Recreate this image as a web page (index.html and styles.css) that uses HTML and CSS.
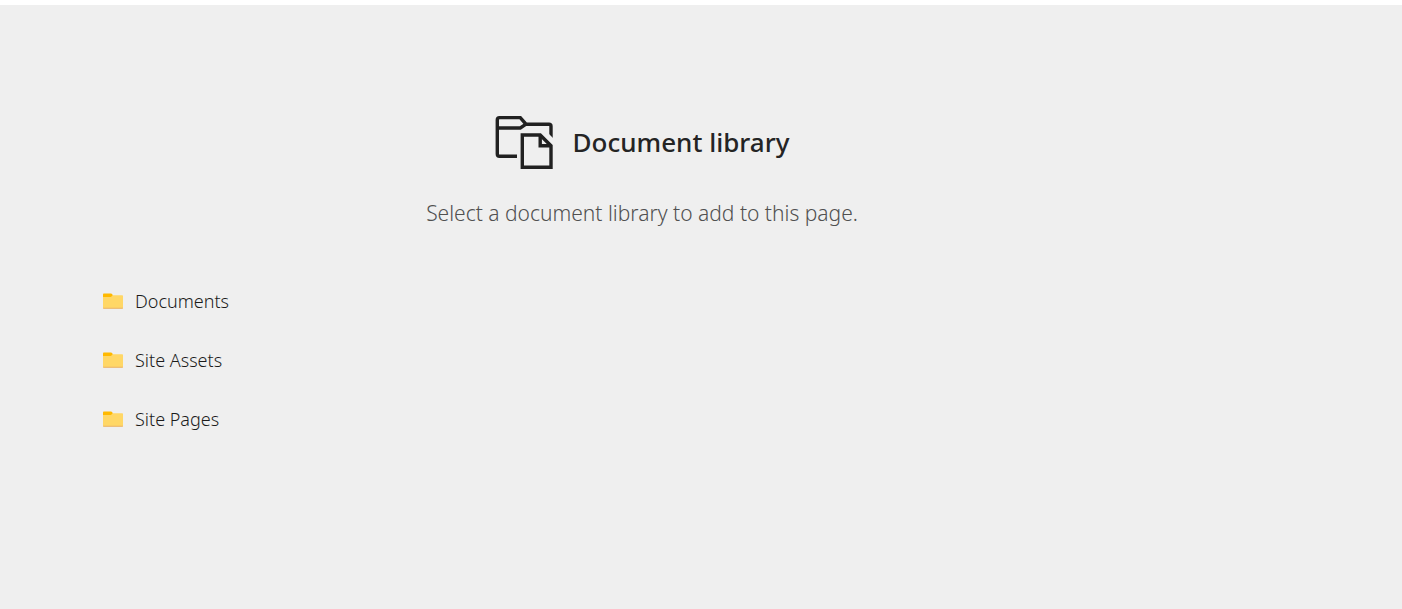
FILE: index.html
```html
<!DOCTYPE html>
<html lang="en">

<head>
    <meta charset="UTF-8">
    <meta name="viewport" content="width=device-width, initial-scale=1.0">
    <title>Document library</title>

    <link rel="stylesheet" href="styles.css">
</head>

<body>

    <!-- folder shape shared by the list items -->
    <svg class="sprite" aria-hidden="true">
        <symbol id="folder" viewBox="0 0 20 16">
            <path fill="#ffb900" d="M0 1.2Q0 .5 .8 .5H8Q8.6 .5 9 1L10 2.5 8 5H0Z" />
            <path fill="#ffd766" d="M0 4H7.5Q8.3 4 8.8 3.2L9.5 2.2H19.2Q20 2.2 20 3V15.5H0Z" />
            <path fill="#e9b26a" d="M0 14.8H20Q20 15.8 19.2 15.8H.8Q0 15.8 0 14.8Z" />
        </symbol>
    </svg>

    <main class="picker">
        <div class="content">

            <header class="heading">
                <svg class="library-icon" viewBox="0 0 58 54" aria-hidden="true">
                    <path d="M22 41.3H4.5Q2.3 41.3 2.3 39V4.8Q2.3 2.6 4.5 2.6H25.3L31 9.2H54Q56 9.2 56 11.2V24" />
                    <path d="M2.3 13H25.3L31 9.2" />
                    <path class="notch" d="M53 18L58 23V25H53Z" />
                    <path d="M27.3 20H45.2L56 30.8V52.3H27.3Z" />
                    <path d="M45.2 20V30.8H56" />
                </svg>
                <h1>Document library</h1>
            </header>

            <p class="description">Select a document library to add to this page.</p>

            <ul class="libraries">
                <li>
                    <button type="button"><svg class="folder-icon" aria-hidden="true"><use href="#folder" /></svg>Documents</button>
                </li>
                <li>
                    <button type="button"><svg class="folder-icon" aria-hidden="true"><use href="#folder" /></svg>Site Assets</button>
                </li>
                <li>
                    <button type="button"><svg class="folder-icon" aria-hidden="true"><use href="#folder" /></svg>Site Pages</button>
                </li>
            </ul>

        </div>
    </main>

</body>

</html>
```

FILE: styles.css
```css
*,
*::before,
*::after {
    margin: 0;
    padding: 0;
    box-sizing: border-box;
}

body {
    display: flex;
    flex-direction: column;
    min-height: 100vh;
    padding-top: 5px;
    background-color: #fff;
    color: #242424;
    font-family: "Segoe UI", "Noto Sans", sans-serif;
}

.sprite {
    display: none;
}

.picker {
    flex: 1;
    padding: 107px 102px 80px;
    background-color: #efefef;
}

.content {
    max-width: 1080px;
}

.heading {
    display: flex;
    align-items: center;
    justify-content: center;
    gap: 20px;
    height: 60px;
}

.heading h1 {
    font-size: 26px;
    font-weight: 500;
    line-height: 36px;
}

.library-icon {
    width: 58px;
    height: 54px;
    fill: none;
    stroke: #212121;
    stroke-width: 3.4;
}

.library-icon .notch {
    fill: #efefef;
    stroke: none;
}

.description {
    margin-top: 25px;
    color: #505050;
    font-size: 21px;
    font-weight: 300;
    line-height: 32px;
    text-align: center;
}

.libraries {
    margin-top: 42px;
    list-style: none;
}

.libraries button {
    display: flex;
    align-items: center;
    gap: 12px;
    height: 59px;
    padding-left: 1px;
    border: none;
    background: none;
    color: #1b1b1b;
    font: inherit;
    font-size: 18px;
    font-weight: 300;
    cursor: pointer;
}

.folder-icon {
    width: 20px;
    height: 16px;
}
```
